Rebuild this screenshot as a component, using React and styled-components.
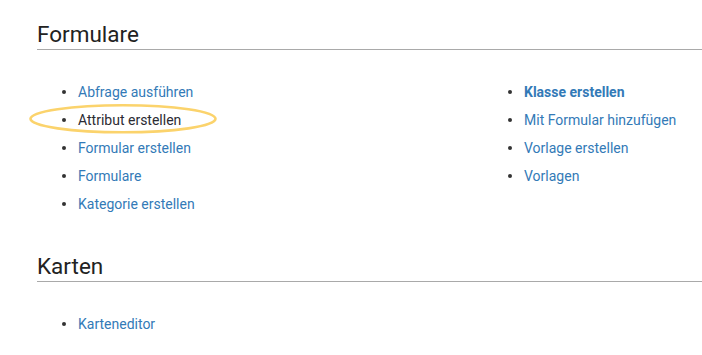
import styled, { createGlobalStyle } from "styled-components";

const Global = createGlobalStyle`
  body {
    margin: 0;
    background: #fff;
    font-family: Roboto, "Liberation Sans", sans-serif;
  }
`;

const Page = styled.div`
  padding: 20.5px 0 0 37px;
`;

const Heading = styled.h2`
  margin: ${(p) => (p.first ? "0" : "35px")} 0 0;
  padding-bottom: 1.5px;
  font-size: 22.5px;
  font-weight: 400;
  line-height: 27px;
  color: #222;
  border-bottom: 1px solid #a9a9a9;
`;

const Columns = styled.div`
  display: grid;
  grid-template-columns: 446px 1fr;
  margin-top: 27.5px;
`;

const List = styled.ul`
  list-style: none;
  margin: 0;
  padding: 0 0 0 41px;
`;

const Item = styled.li`
  position: relative;
  font-size: 14px;
  line-height: 28px;
  white-space: nowrap;

  &::before {
    content: "";
    display: inline-block;
    width: 4px;
    height: 4px;
    border-radius: 50%;
    background: #333;
    margin: 0 0 0 -16px;
    vertical-align: 3px;
    width: 4px;
  }
`;

const Link = styled.a`
  margin-left: 12px;
  color: ${(p) => (p.plain ? "#2b2b33" : "#337ab7")};
  font-weight: ${(p) => (p.bold ? 700 : 400)};
  text-decoration: none;
`;

const Mark = styled.svg`
  position: absolute;
  left: -49px;
  top: -2px;
  width: 188px;
  height: 30px;
  overflow: visible;
  pointer-events: none;
`;

const Highlight = () => (
  <Mark viewBox="0 0 188 30">
    <ellipse
      cx="94"
      cy="14.8"
      rx="92.5"
      ry="13.5"
      fill="none"
      stroke="#fbd36c"
      strokeWidth="2.6"
    />
  </Mark>
);

const left = [
  { t: "Abfrage ausführen" },
  { t: "Attribut erstellen", plain: true, mark: true },
  { t: "Formular erstellen" },
  { t: "Formulare" },
  { t: "Kategorie erstellen" },
];

const right = [
  { t: "Klasse erstellen", bold: true },
  { t: "Mit Formular hinzufügen" },
  { t: "Vorlage erstellen" },
  { t: "Vorlagen" },
];

const renderItems = (items) =>
  items.map((it) => (
    <Item key={it.t}>
      {it.mark && <Highlight />}
      <Link href="#" plain={it.plain} bold={it.bold}>
        {it.t}
      </Link>
    </Item>
  ));

export default function App() {
  return (
    <>
      <Global />
      <Page>
        <Heading first>Formulare</Heading>
        <Columns>
          <List>{renderItems(left)}</List>
          <List>{renderItems(right)}</List>
        </Columns>
        <Heading>Karten</Heading>
        <Columns>
          <List>{renderItems([{ t: "Karteneditor" }])}</List>
        </Columns>
      </Page>
    </>
  );
}
